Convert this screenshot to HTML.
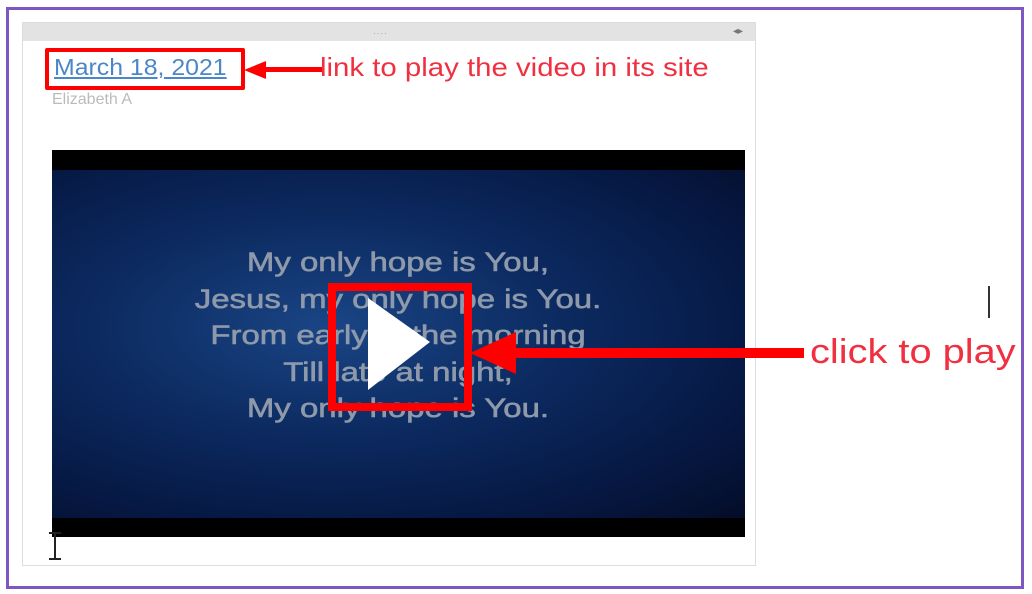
<!DOCTYPE html>
<html><head><style>
body{margin:0;width:1032px;height:594px;background:#fff;position:relative;overflow:hidden;font-family:"Liberation Sans",sans-serif}
.a{position:absolute}
</style></head><body>
<div class="a" style="left:6px;top:7px;width:1012px;height:576px;border:3px solid #7e57c2"></div>
<div class="a" style="left:22px;top:22px;width:732px;height:542px;border:1px solid #ddd;background:#fff"></div>
<div class="a" style="left:23px;top:23px;width:732px;height:18px;background:#e3e3e3"></div>
<div class="a" style="left:373px;top:29px;font-size:8px;color:#999;letter-spacing:1px">····</div>
<div class="a" style="left:733px;top:26px;font-size:10px;color:#777">◂▸</div>
<div class="a" style="left:45px;top:48px;width:192px;height:34px;border:4px solid #f00;border-radius:2px"></div>
<div class="a" style="left:54px;top:54px;font-size:23px;color:#4a86c8;text-decoration:underline;transform:scaleX(1.08);transform-origin:left">March 18, 2021</div>
<div class="a" style="left:52px;top:91px;font-size:16px;color:#bbb">Elizabeth A</div>
<svg class="a" style="left:244px;top:58px" width="80" height="24"><polygon points="0,12 22,3 22,21" fill="#f00"/><rect x="20" y="9" width="58" height="5" fill="#f00"/></svg>
<div class="a" style="left:320px;top:52px;font-size:26px;color:#f03040;white-space:nowrap;transform:scaleX(1.13);transform-origin:left">link to play the video in its site</div>
<div class="a" style="left:52px;top:150px;width:693px;height:387px;background:#000"></div>
<div class="a" style="left:52px;top:170px;width:693px;height:348px;background:radial-gradient(ellipse at 40% 45%,#1a4585 0%,#0c2a60 40%,#061843 75%,#040d28 100%)"></div>
<div class="a" style="left:150px;top:244px;width:496px;text-align:center;font-size:27px;line-height:36.5px;color:#8e99aa;transform:scaleX(1.22);transform-origin:248px 0;-webkit-text-stroke:0.6px #8e99aa">My only hope is You,<br>Jesus, my only hope is You.<br>From early in the morning<br>Till late at night,<br>My only hope is You.</div>
<div class="a" style="left:328px;top:283px;width:128px;height:112px;border:8px solid #f00"></div>
<svg class="a" style="left:360px;top:290px" width="80" height="110"><polygon points="8,8 70,52 8,100" fill="#fff"/></svg>
<svg class="a" style="left:470px;top:330px" width="340" height="46"><polygon points="0,23 46,2 46,44" fill="#f00"/><rect x="44" y="18" width="290" height="10" fill="#f00"/></svg>
<div class="a" style="left:810px;top:333px;font-size:34px;color:#f03040;white-space:nowrap;transform:scaleX(1.17);transform-origin:left">click to play</div>
<div class="a" style="left:988px;top:286px;width:2px;height:32px;background:#333"></div>
<div class="a" style="left:54px;top:532px;width:2px;height:28px;background:#222"></div>
<div class="a" style="left:49px;top:532px;width:12px;height:2px;background:#222"></div>
<div class="a" style="left:49px;top:558px;width:12px;height:2px;background:#222"></div>
</body></html>
